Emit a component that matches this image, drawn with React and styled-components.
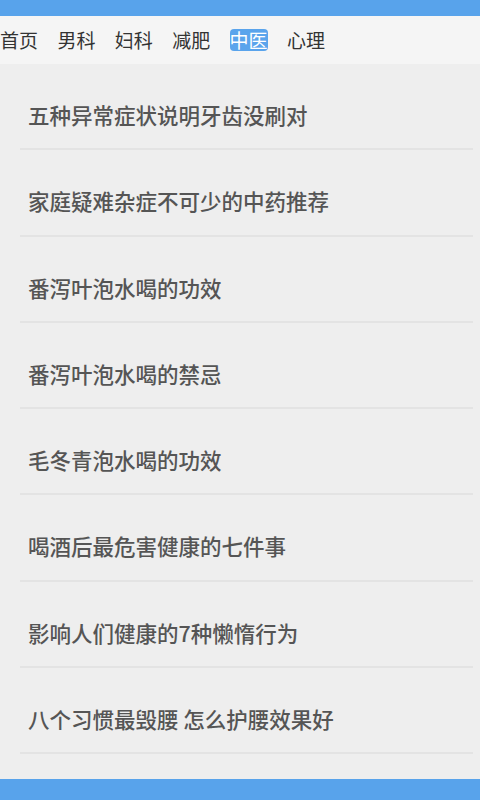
import styled, { createGlobalStyle } from 'styled-components'

const GlobalStyle = createGlobalStyle`
  html, body {
    margin: 0;
    padding: 0;
  }
  body {
    font-family: "Noto Sans CJK SC", "Noto Sans", sans-serif;
  }
`

const Page = styled.div`
  width: 480px;
  height: 800px;
  display: flex;
  flex-direction: column;
  background-color: #eeeeee;
  overflow: hidden;
`

const StatusBar = styled.div`
  height: 16px;
  flex-shrink: 0;
  background-color: #58a3eb;
`

const TabBar = styled.div`
  height: 48px;
  flex-shrink: 0;
  display: flex;
  align-items: center;
  gap: 19.4px;
  background-color: #f5f5f5;
`

const Tab = styled.div`
  width: 38px;
  height: 22px;
  display: flex;
  align-items: center;
  justify-content: center;
  font-size: 19px;
  line-height: 22px;
  white-space: nowrap;
  border-radius: 4px;
  color: ${p => (p.$active ? '#ffffff' : '#333333')};
  background-color: ${p => (p.$active ? '#5aa4ec' : 'transparent')};
`

const List = styled.div`
  flex: 1;
  display: flex;
  flex-direction: column;
`

const Item = styled.div`
  height: 86.3px;
  box-sizing: border-box;
  margin: 0 7px 0 20px;
  padding: 39px 0 0 8px;
  border-bottom: 2px solid #e3e3e3;
  font-size: 21.5px;
  line-height: 24px;
  font-weight: 500;
  color: #555555;
`

const BottomBar = styled.div`
  height: 21px;
  flex-shrink: 0;
  background-color: #58a3eb;
`

const tabs = ['首页', '男科', '妇科', '减肥', '中医', '心理']

const articles = [
  '五种异常症状说明牙齿没刷对',
  '家庭疑难杂症不可少的中药推荐',
  '番泻叶泡水喝的功效',
  '番泻叶泡水喝的禁忌',
  '毛冬青泡水喝的功效',
  '喝酒后最危害健康的七件事',
  '影响人们健康的7种懒惰行为',
  '八个习惯最毁腰 怎么护腰效果好',
]

export default function App() {
  return (
    <Page>
      <GlobalStyle />
      <StatusBar />
      <TabBar>
        {tabs.map(t => (
          <Tab key={t} $active={t === '中医'}>{t}</Tab>
        ))}
      </TabBar>
      <List>
        {articles.map(a => (
          <Item key={a}>{a}</Item>
        ))}
      </List>
      <BottomBar />
    </Page>
  )
}
